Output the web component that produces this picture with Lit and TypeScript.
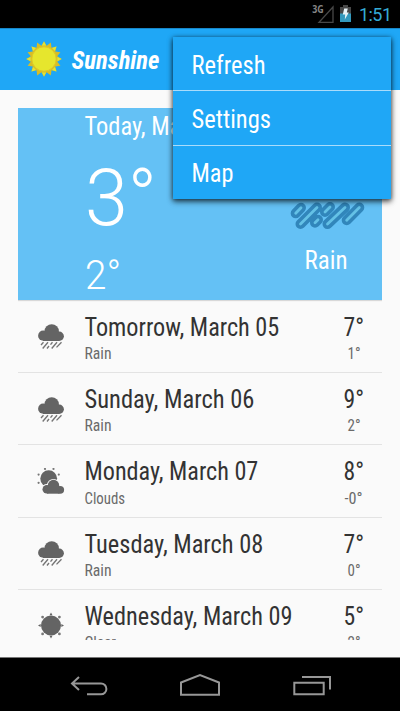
import { LitElement, html, css, svg } from "lit";
import { customElement, property } from "lit/decorators.js";

/** A line of condensed text; the baseline lies `size` pixels below the box top. */
@customElement("condensed-text")
class CondensedText extends LitElement {
  @property() text = "";
  @property({ type: Number }) width = 50;
  @property({ type: Number }) size = 25;

  static styles = css`
    :host { display: block; }
    svg { display: block; overflow: visible; fill: currentColor; }
    text { font-family: "Roboto Condensed", Roboto, sans-serif; font-stretch: 75%; }
  `;

  render() {
    return html`<svg width=${this.width} height=${this.size * 1.25}>
      <text x="-0.5" y=${this.size} font-size=${this.size} textLength=${this.width} lengthAdjust="spacingAndGlyphs">${this.text}</text>
    </svg>`;
  }
}

@customElement("weather-icon")
class WeatherIcon extends LitElement {
  @property() kind = "rain";

  static styles = css`
    :host { display: block; width: 28px; height: 28px; }
    svg { display: block; fill: #646464; }
  `;

  rain() {
    return svg`
      <circle cx="14.7" cy="8.4" r="7.2"/><circle cx="6.2" cy="12.7" r="5.1"/>
      <circle cx="22.2" cy="13.3" r="4.7"/><path d="M6 9h16v9H6z"/>
      <path d="M6.5 19.2l-2.5 2.8M11 19.2l-5.3 6.3M15.5 19.2l-2 2.4M12 23l-2 2.5M20 19.2l-5.3 6.3M24.5 19.2l-5 5.2" fill="none" stroke="#757575" stroke-width="1.35"/>`;
  }

  clouds() {
    return svg`
      <circle cx="11.7" cy="10.6" r="8.4"/>
      <g fill="#777"><circle cx="8" cy="1" r="1.1"/><circle cx="16.5" cy="1" r="1.1"/><circle cx="1.6" cy="6.6" r="1.1"/><circle cx="21.8" cy="6.6" r="1.1"/><circle cx="1.6" cy="14.8" r="1.1"/></g>
      <g stroke="#fafafa" stroke-width="1.8"><circle cx="16.5" cy="17.5" r="5.7"/><circle cx="9.8" cy="21" r="4.1"/></g>
      <circle cx="16.5" cy="17.5" r="5.7"/><circle cx="9.8" cy="21.3" r="4.3"/><circle cx="23.2" cy="21.8" r="3.9"/><path d="M10 18h12.5v7.7H10z"/>`;
  }

  clear() {
    return svg`
      <circle cx="14" cy="13.5" r="10"/>
      <path d="M14 .5l1.5 2.7h-3zM14 26.5l1.5-2.7h-3zM1 13.5l2.7-1.5v3zM27 13.5l-2.7-1.5v3z"/>
      <g fill="#777"><circle cx="5.6" cy="5.1" r="1.4"/><circle cx="22.4" cy="5.1" r="1.4"/><circle cx="5.6" cy="21.9" r="1.4"/><circle cx="22.4" cy="21.9" r="1.4"/></g>`;
  }

  render() {
    const art = this.kind === "clouds" ? this.clouds() : this.kind === "clear" ? this.clear() : this.rain();
    return html`<svg width="28" height="28" viewBox="0 0 28 28">${art}</svg>`;
  }
}

const days = [
  { day: "Tomorrow, March 05", w: 194.8, sky: "Rain", sw: 27, icon: "rain", hi: "7°", lo: "1°", lw: 13 },
  { day: "Sunday, March 06", w: 169.8, sky: "Rain", sw: 27, icon: "rain", hi: "9°", lo: "2°", lw: 13 },
  { day: "Monday, March 07", w: 173.8, sky: "Clouds", sw: 40.5, icon: "clouds", hi: "8°", lo: "-0°", lw: 18 },
  { day: "Tuesday, March 08", w: 178.8, sky: "Rain", sw: 27, icon: "rain", hi: "7°", lo: "0°", lw: 13 },
  { day: "Wednesday, March 09", w: 208, sky: "Clear", sw: 31.5, icon: "clear", hi: "5°", lo: "2°", lw: 13 },
];

const menu = [
  { label: "Refresh", w: 74 },
  { label: "Settings", w: 79.5 },
  { label: "Map", w: 42 },
];

@customElement("app-root")
class AppRoot extends LitElement {
  static styles = css`
    :host { display: flex; flex-direction: column; position: relative; width: 400px; height: 711px; overflow: hidden; background: #fafafa; font-family: Roboto, sans-serif; }
    .status { display: flex; justify-content: flex-end; height: 28px; flex: none; background: #000; }
    .status svg, .nav svg { display: block; }
    .net { font: bold 10.5px "Open Sans", sans-serif; fill: #858585; }
    .clock { font: 18px Roboto, sans-serif; fill: #35abd6; }
    .bar { box-sizing: border-box; height: 62px; flex: none; display: flex; gap: 9.5px; padding: 12px 0 0 26.3px; background: #1fa7f6; color: #fff; border-top: 1px solid #1787c8; }
    .bar svg { display: block; }
    .brand { font-weight: 700; font-style: italic; padding-top: 2.5px; }
    .list { height: 532px; margin: 18px 18px 0; overflow: hidden; flex: none; }
    .today { display: flex; justify-content: space-between; height: 192px; margin-bottom: .8px; background: #64c1f5; color: #fff; box-shadow: 0 1px 1px #0002; }
    .main { display: flex; flex-direction: column; padding: 1.6px 0 0 66.5px; }
    .high, .low { display: block; overflow: visible; fill: #fff; }
    .high { font: 300 79.5px Roboto, sans-serif; }
    .low { font: 300 40px Roboto, sans-serif; }
    .sky { display: flex; flex-direction: column; align-items: center; gap: 4.4px; width: 112px; padding-top: 92px; }
    .row { display: flex; box-sizing: border-box; height: 72.25px; border-bottom: 1px solid #e3e3e3; color: #333; }
    .row:last-child { border-bottom: 0; }
    .icon { width: 66.5px; padding: 22.5px 0 0 19px; box-sizing: border-box; }
    .text { flex: 1; padding-top: 10px; }
    .minor { padding-top: 1px; color: #6a6a6a; }
    .temps { display: flex; flex-direction: column; align-items: center; width: 56px; padding-top: 10px; }
    .nav { margin-top: auto; height: 54px; box-sizing: border-box; border-top: 1px solid #777; background: #000; flex: none; }
    .menu { position: absolute; left: 173.4px; top: 37px; width: 217.6px; height: 162px; background: #1fa7f6; color: #fff; box-shadow: 0 1px 5px #000a, 0 3px 6px #0006; }
    .item { box-sizing: border-box; height: 54.4px; padding: 11.7px 0 0 18.3px; border-bottom: 1px solid #a9dcfb; }
    .item:last-child { border-bottom: 0; }
  `;

  sun() {
    const points = Array.from({ length: 32 }, (_, i) => {
      const a = (i * Math.PI) / 16;
      const r = i % 2 ? 13.5 : 17.8;
      return `${18 + r * Math.sin(a)},${18 - r * Math.cos(a)}`;
    }).join(" ");
    return html`<svg width="36" height="36">
      <polygon points=${points} fill="#d8bd25"/>
      ${[0, 45, 90, 135, 180, 225, 270, 315].map((a) => svg`<path d="M18 .4l2 4.2h-4z" fill="#dfe43a" transform="rotate(${a} 18 18)"/>`)}
      <circle cx="18" cy="18" r="12.2" fill="#e6e62d" stroke="#dfc728" stroke-width="1"/>
    </svg>`;
  }

  render() {
    return html`
      <div class="status">
        <svg width="90" height="28">
          <text class="net" x="2.2" y="13.2" textLength="11.5" lengthAdjust="spacingAndGlyphs">3G</text>
          <path d="M9 22.4H23V7z" fill="none" stroke="#484848" stroke-width="1.3"/>
          <path d="M30 7h3V5h5v2h3v15H30z" fill="#484848"/>
          <path d="M30 13.5h11V22H30z" fill="#3399bd"/>
          <path d="M34.2 8.5h3.6l-1 4h2l-4 7 .4-5h-2.4z" fill="#e8f3f7"/>
          <text class="clock" x="49" y="21.3" textLength="33">1:51</text>
        </svg>
      </div>
      <div class="bar">
        ${this.sun()}
        <condensed-text class="brand" text="Sunshine" width="88"></condensed-text>
      </div>
      <div class="list">
        <div class="today">
          <div class="main">
            <condensed-text text="Today, March 04" width="157"></condensed-text>
            <svg class="high" width="80" height="85"><text x="0" y="84" textLength="72" lengthAdjust="spacingAndGlyphs">3°</text></svg>
            <svg class="low" width="50" height="64"><text x="0" y="63" textLength="36" lengthAdjust="spacingAndGlyphs">2°</text></svg>
          </div>
          <div class="sky">
            <svg width="80" height="40" fill="none" stroke-linecap="round">
              ${[["#3186bb", 10], ["#64c1e6", 2.8]].map(([color, w]) => svg`
                <path d="M9.7 13.3l5.3-5.5M14.5 24L31 7.5M29 22.7l3-3M39 12l5-5M41.5 24L59 7.5M60.7 20.2L73.3 7.5" stroke=${color} stroke-width=${w}/>`)}
            </svg>
            <condensed-text text="Rain" width="43"></condensed-text>
          </div>
        </div>
        ${days.map((d) => html`
          <div class="row">
            <div class="icon"><weather-icon kind=${d.icon}></weather-icon></div>
            <div class="text">
              <condensed-text text=${d.day} width=${d.w}></condensed-text>
              <condensed-text class="minor" text=${d.sky} width=${d.sw} size="16"></condensed-text>
            </div>
            <div class="temps">
              <condensed-text text=${d.hi} width="20.5"></condensed-text>
              <condensed-text class="minor" text=${d.lo} width=${d.lw} size="16"></condensed-text>
            </div>
          </div>`)}
      </div>
      <div class="nav">
        <svg width="400" height="53" fill="none" stroke="#979797" stroke-width="2">
          <path d="M79 19l-7 6.5 7 6.5M72 25.5H101a5.4 5.4 0 0 1 0 10.8H87"/>
          <path d="M181 36.7V24.5L200 17l19 7.5v12.2z"/>
          <path d="M294.3 24.7h29.4v11.6h-29.4zM302 19h28v12.5"/>
        </svg>
      </div>
      <div class="menu">
        ${menu.map((m) => html`<div class="item"><condensed-text text=${m.label} width=${m.w}></condensed-text></div>`)}
      </div>
    `;
  }
}
